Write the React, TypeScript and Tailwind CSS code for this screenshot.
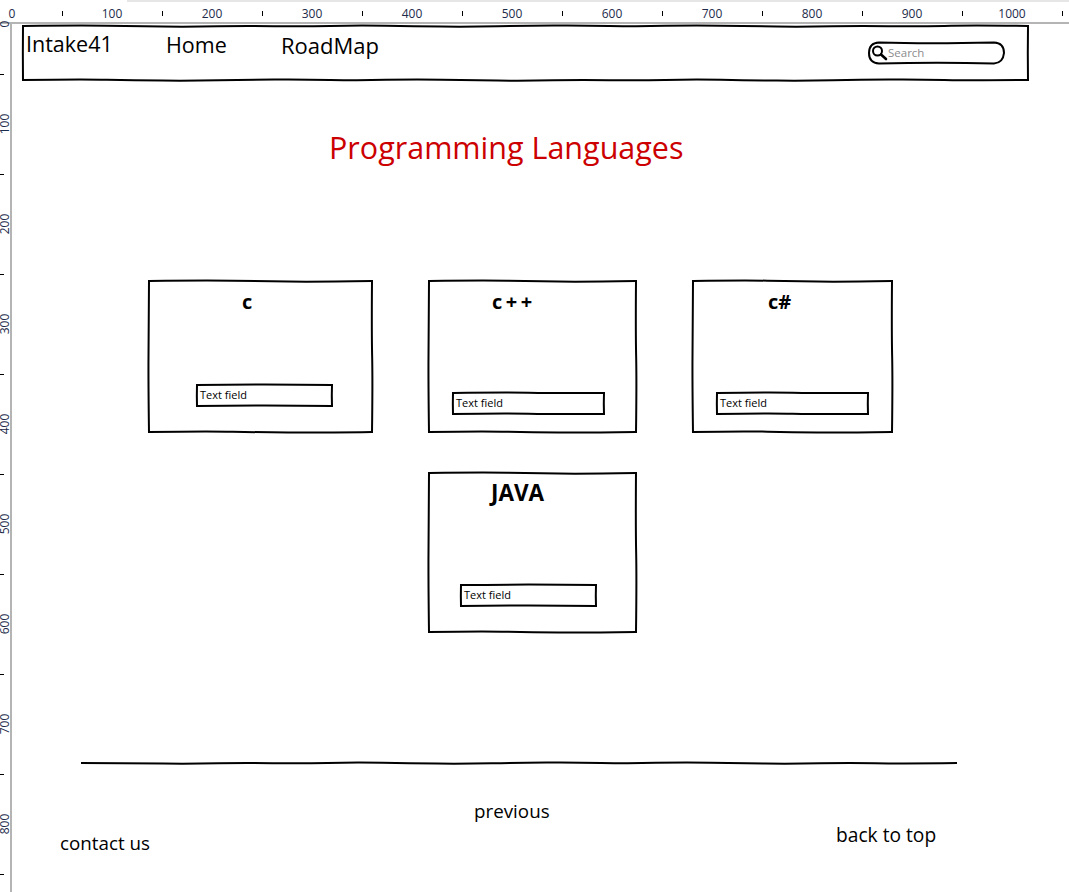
import React from "react";

const font = { fontFamily: '"Open Sans", "Noto Sans", sans-serif' };

const wobble = [0.5, -0.8, 0.2, 0.9, -0.4, 0.7, -0.9, 0.3, 0.8, -0.3, -0.7];

// one hand drawn line: points every ~55px pushed off the line, smoothed through the midpoints
const edgePath = (x1: number, y1: number, x2: number, y2: number, seed: number) => {
  const len = Math.abs(x2 - x1) + Math.abs(y2 - y1);
  const n = Math.max(2, Math.round(len / 55));
  const horizontal = y1 === y2;
  const pts = [];
  for (let i = 0; i <= n; i++) {
    const t = i / n;
    const o = i === 0 || i === n ? 0 : wobble[(seed + i) % wobble.length];
    pts.push([x1 + (x2 - x1) * t + (horizontal ? 0 : o), y1 + (y2 - y1) * t + (horizontal ? o : 0)]);
  }
  let d = `M${pts[0][0]} ${pts[0][1]}`;
  for (let i = 1; i < n; i++) {
    const mx = (pts[i][0] + pts[i + 1][0]) / 2;
    const my = (pts[i][1] + pts[i + 1][1]) / 2;
    d += ` Q${pts[i][0]} ${pts[i][1]} ${i === n - 1 ? pts[n][0] : mx} ${i === n - 1 ? pts[n][1] : my}`;
  }
  return d;
};

const SketchBox = ({ w, h }: { w: number; h: number }) => (
  <svg width={w} height={h} className="absolute left-0 top-0 overflow-visible">
    <g fill="none" stroke="black" strokeWidth="2" strokeLinecap="square">
      <path d={edgePath(1, 1, w - 1, 1, 0)} />
      <path d={edgePath(w - 1, 1, w - 1, h - 1, 3)} />
      <path d={edgePath(1, h - 1, w - 1, h - 1, 5)} />
      <path d={edgePath(1, 1, 1, h - 1, 8)} />
    </g>
  </svg>
);

const TextField = ({ w, className }: { w: number; className: string }) => (
  <div className={`relative h-[23px] flex items-center pl-[4px] pb-[1px] ${className}`}>
    <SketchBox w={w} h={23} />
    <span className="relative text-[11px] leading-[16px] text-black">Text field</span>
  </div>
);

const topTicks = [0, 100, 200, 300, 400, 500, 600, 700, 800, 900, 1000, 1100];
const sideTicks = [0, 100, 200, 300, 400, 500, 600, 700, 800, 900];

const TopRuler = () => (
  <div className="relative flex h-[24px] shrink-0 overflow-hidden border-b-2 border-[#b4b4b4] bg-white pl-[12px]">
    <div className="flex -ml-[25px]">
      {topTicks.map((v) => (
        <div key={v} className="flex w-[100px] shrink-0">
          <span className="w-[50px] pt-[6px] text-center text-[12px] leading-[16px] text-[#1c2b4a]">{v < 1100 && v}</span>
          <div className="flex w-[50px] justify-center pt-[11px]">
            <div className="h-[5px] w-px bg-black" />
          </div>
        </div>
      ))}
    </div>
    <div className="absolute left-[127px] right-0 top-0 h-[2px] bg-[#e6e6e6]" />
  </div>
);

const SideRuler = () => (
  <div className="flex h-[868px] w-[12px] shrink-0 flex-col border-r-2 border-[#b4b4b4] bg-white">
    <div className="flex flex-col -mt-[25px]">
      {sideTicks.map((v) => (
        <div key={v} className="flex h-[100px] shrink-0 flex-col">
          <div className="flex h-[50px] items-center justify-center">
            <span className="-rotate-90 text-[12px] leading-[10px] text-[#1c2b4a]">{v < 900 && v}</span>
          </div>
          <div className="flex h-[50px] items-center">
            <div className="h-px w-[4px] bg-black" />
          </div>
        </div>
      ))}
    </div>
  </div>
);

const Nav = () => (
  <div className="relative ml-[11px] mt-[1px] grid h-[56px] w-[1007px] grid-cols-[140px_115px_1fr_137px] pl-[4px] pr-[24px]">
    <SketchBox w={1007} h={56} />
    <span className="relative pt-[4px] text-[21.5px] leading-[30px]">Intake41</span>
    <span className="relative pt-[5px] text-[21.5px] leading-[30px]">Home</span>
    <span className="relative pt-[5px] text-[22px] leading-[30px]">RoadMap</span>
    <div className="relative mt-[16px] flex h-[24px] w-[137px] items-center pl-[20px]">
      <svg width="137" height="24" className="absolute left-0 top-0">
        <path d="M11 1.5Q60 3 126 1.5Q136 2 136 12Q135 22 126 22.5Q70 21 11 22.5Q1 22 1 12Q1 2 11 1.5Z" fill="none" stroke="black" strokeWidth="2" />
        <circle cx="9.5" cy="10" r="4.5" fill="none" stroke="black" strokeWidth="2" />
        <path d="M13 13.5l5 4.5" stroke="black" strokeWidth="2.6" strokeLinecap="round" />
      </svg>
      <span className="relative text-[11.5px] leading-[16px] text-[#8c8c8c]">Search</span>
    </div>
  </div>
);

export default function App() {
  return (
    <div className="flex h-[892px] w-[1069px] flex-col overflow-hidden bg-white text-black" style={font}>
      <TopRuler />
      <div className="flex">
        <SideRuler />
        <main className="flex min-w-0 flex-1 flex-col -ml-px">
          <Nav />

          <h1 className="ml-[318px] mt-[46px] h-[44px] text-[30.5px] leading-[41px] font-normal whitespace-nowrap text-[#cc0000]">
            Programming Languages
          </h1>

          <div className="ml-[137px] mt-[109px] flex gap-[55px]">
            <section className="relative flex h-[153px] w-[225px] flex-col justify-between pb-[26px]">
              <SketchBox w={225} h={153} />
              <h2 className="relative pl-[94px] pt-[12px] text-[20px] font-bold leading-none">c</h2>
              <TextField w={137} className="ml-[48px] w-[137px]" />
            </section>
            <section className="relative flex h-[153px] w-[209px] flex-col justify-between pb-[18px]">
              <SketchBox w={209} h={153} />
              <h2 className="relative pl-[64px] pt-[12px] text-[20px] font-bold leading-none tracking-[3.5px]">c++</h2>
              <TextField w={153} className="ml-[24px] w-[153px]" />
            </section>
            <section className="relative flex h-[153px] w-[201px] flex-col justify-between pb-[18px]">
              <SketchBox w={201} h={153} />
              <h2 className="relative pl-[76px] pt-[12px] text-[20px] font-bold leading-none">c#</h2>
              <TextField w={153} className="ml-[24px] w-[153px]" />
            </section>
          </div>

          <section className="relative ml-[417px] mt-[39px] flex h-[161px] w-[209px] flex-col justify-between pb-[26px]">
            <SketchBox w={209} h={161} />
            <h2 className="relative pl-[63px] pt-[10px] text-[22.5px] font-bold leading-none">JAVA</h2>
            <TextField w={137} className="ml-[32px] w-[137px]" />
          </section>

          <svg width="876" height="4" className="ml-[70px] mt-[128px] shrink-0 overflow-visible">
            <path d={edgePath(0, 2, 876, 2, 1)} fill="none" stroke="black" strokeWidth="2" />
          </svg>

          <footer className="grid grid-cols-[463px_362px_1fr] text-[18.8px] leading-[26px]">
            <span className="pl-[49px] pt-[65px]">contact us</span>
            <span className="pt-[33px]">previous</span>
            <span className="pt-[57px] text-[19.2px]">back to top</span>
          </footer>
        </main>
      </div>
    </div>
  );
}
